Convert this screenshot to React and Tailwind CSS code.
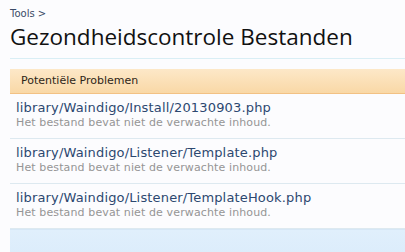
export default function App() {
  const rows = [
    "library/Waindigo/Install/20130903.php",
    "library/Waindigo/Listener/Template.php",
    "library/Waindigo/Listener/TemplateHook.php",
  ];
  return (
    <div className="w-[405px] h-[252px] overflow-hidden bg-[#fcfcfe] pl-[10px]">
      <div className="pt-[7px] h-[20px] text-[10px] leading-[13px] text-[#3a4a66] font-['DejaVu_Sans',sans-serif]">
        Tools &gt;
      </div>
      <h1 className="mt-[3px] h-[28px] text-[22.5px] leading-[28px] text-[#111] font-['Open_Sans',sans-serif]">
        Gezondheidscontrole Bestanden
      </h1>
      <div className="mt-[7px] h-px bg-[#d9eef5]" />
      <div className="mt-[10px]">
        <div className="h-[25px] flex items-center pl-[11px] bg-gradient-to-b from-[#fde8c8] to-[#f9d8a6] border-b border-[#f2c184] text-[11px] text-[#2e2618] font-['DejaVu_Sans',sans-serif]">
          Potentiële Problemen
        </div>
        {rows.map((r) => (
          <div key={r} className="h-[45px] border-b border-[#dde9f0] pl-[6px] pt-[6px] font-['DejaVu_Sans',sans-serif]">
            <div className="text-[13px] leading-[16px] tracking-[0.16px] text-[#2c4870]">{r}</div>
            <div className="text-[11px] leading-[14px] tracking-[0.12px] text-[#959595]">
              Het bestand bevat niet de verwachte inhoud.
            </div>
          </div>
        ))}
        <div className="h-[30px] bg-gradient-to-b from-[#e0effc] to-[#dbecfb] border-t border-[#d6e7f6]" />
      </div>
    </div>
  );
}
